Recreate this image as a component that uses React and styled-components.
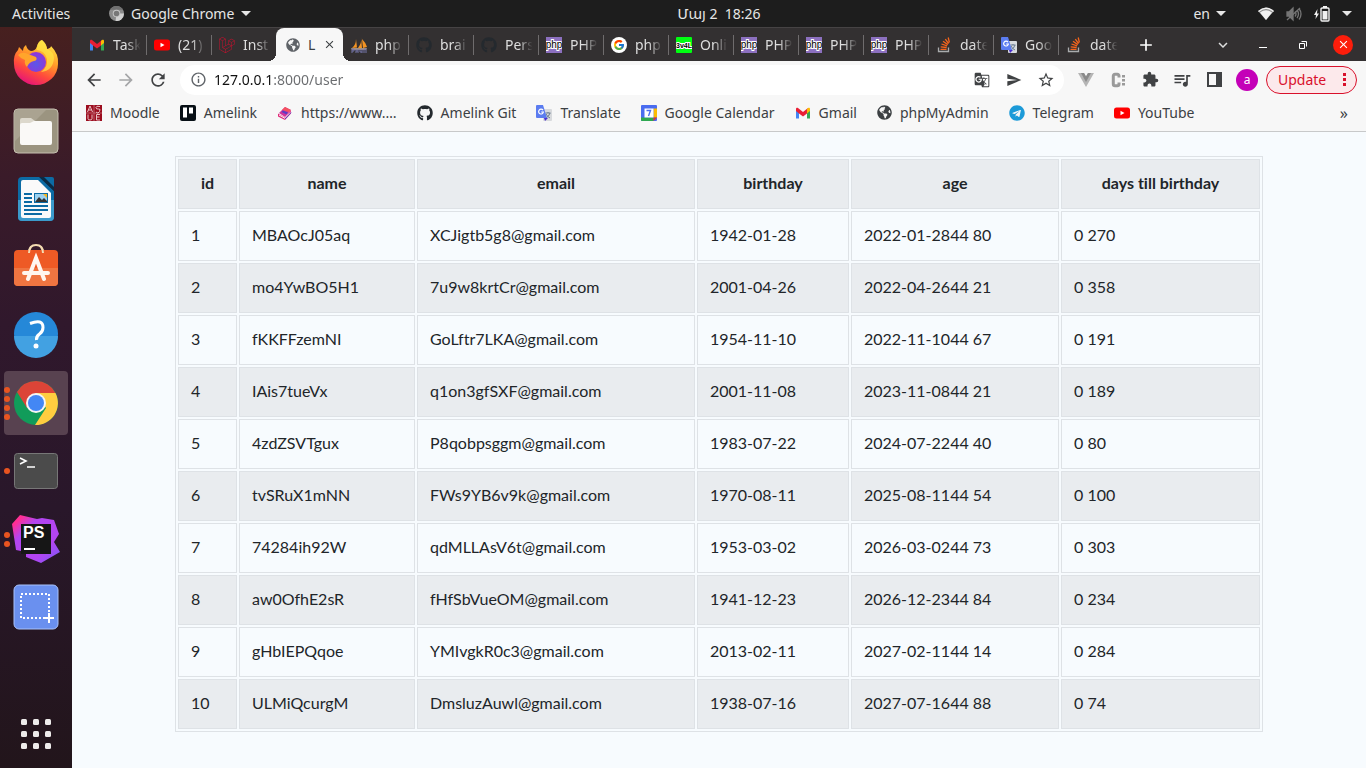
import React from "react";
import styled, { createGlobalStyle, css } from "styled-components";
import { FaGithub, FaGlobeAmericas, FaTelegram } from "react-icons/fa";
import { FcGoogle } from "react-icons/fc";
import { SiLaravel } from "react-icons/si";
import {
  MdAdd,
  MdArrowBack,
  MdArrowForward,
  MdClose,
  MdExtension,
  MdExpandMore,
  MdGTranslate,
  MdInfoOutline,
  MdQueueMusic,
  MdRefresh,
  MdSend,
  MdStarBorder,
} from "react-icons/md";

const GlobalStyle = createGlobalStyle`
  *, *::before, *::after { box-sizing: border-box; }
  body { margin: 0; background: #f7fbfe; }
  button { border: 0; padding: 0; background: none; color: inherit; font: inherit; cursor: pointer; }
  svg { display: block; flex: none; }
`;

const uiFont = css`
  font-family: "Noto Sans", "DejaVu Sans", sans-serif;
`;

/* ---------- layout ---------- */

const Desktop = styled.div`
  ${uiFont}
  font-size: 14px;
  display: flex;
  flex-direction: column;
  min-height: 100vh;
`;

const TopBar = styled.header`
  display: grid;
  grid-template-columns: 72px 1fr auto 1fr;
  align-items: center;
  height: 27px;
  background: #1d1d1d;
  color: #e6e6e6;
  white-space: nowrap;
`;

const ActivitiesButton = styled.button`
  padding-left: 12px;
  text-align: left;
`;

const AppMenu = styled.button`
  display: flex;
  align-items: center;
  gap: 7px;
  padding-left: 37px;
`;

const Clock = styled.button`
  white-space: pre;
`;

const StatusArea = styled.div`
  display: flex;
  align-items: center;
  justify-content: flex-end;
  gap: 12px;
  padding-right: 14px;
`;

const LanguageMenu = styled.button`
  display: flex;
  align-items: center;
  gap: 6px;
  margin-right: 20px;
`;

const Workspace = styled.div`
  display: flex;
  flex: 1;
`;

const Dock = styled.nav`
  display: flex;
  flex-direction: column;
  align-items: center;
  gap: 4px;
  flex: none;
  width: 72px;
  padding: 4px 4px 2px;
  background: linear-gradient(#47201f 0, #3a1b29 20%, #30182c 40%, #29172a 65%, #22151b 100%);
`;

const DockButton = styled.button`
  position: relative;
  display: grid;
  place-items: center;
  width: 64px;
  height: 64px;
  border-radius: 4px;
  background: ${(p) => (p.$active ? "#584250" : "none")};
  margin-top: ${(p) => (p.$last ? "auto" : "0")};
`;

const RunningDots = styled.span`
  position: absolute;
  left: 0;
  top: 0;
  bottom: 0;
  display: flex;
  flex-direction: column;
  justify-content: center;
  gap: 3px;
`;

const RunningDot = styled.i`
  width: 6px;
  height: 6px;
  border-radius: 50%;
  background: #e95420;
`;

const BrowserWindow = styled.div`
  display: flex;
  flex-direction: column;
  flex: 1;
  min-width: 0;
`;

/* ---------- tab strip ---------- */

const TabStrip = styled.div`
  display: flex;
  align-items: flex-end;
  height: 34px;
  padding-left: 9px;
  border-top: 1px solid #464344;
  background: #333031;
  color: #dedede;
`;

const Tabs = styled.div`
  display: flex;
  align-self: stretch;
`;

const Tab = styled.button`
  position: relative;
  display: flex;
  align-items: center;
  gap: 8px;
  width: ${(p) => (p.$active ? 67 : 65)}px;
  padding: ${(p) => (p.$active ? "0 9px 0 10px" : "0 3px 0 8px")};
  color: ${(p) => (p.$active ? "#3c4043" : "inherit")};
  background: ${(p) => (p.$active ? "#f7f7f7" : "none")};
  border-radius: ${(p) => (p.$active ? "8px 8px 0 0" : "0")};

  ${(p) =>
    p.$divided &&
    css`
      &::before {
        content: "";
        position: absolute;
        left: 0;
        top: 7px;
        width: 1px;
        height: 20px;
        background: #6f6c6d;
      }
    `}

  ${(p) =>
    p.$active &&
    css`
      &::before,
      &::after {
        content: "";
        position: absolute;
        bottom: 0;
        width: 8px;
        height: 8px;
      }
      &::before {
        right: 100%;
        background: radial-gradient(circle at 0 0, #333031 8px, #f7f7f7 8px);
      }
      &::after {
        left: 100%;
        background: radial-gradient(circle at 100% 0, #333031 8px, #f7f7f7 8px);
      }
    `}
`;

const TabTitle = styled.span`
  flex: 1;
  white-space: nowrap;
  text-align: left;

  ${(p) =>
    !p.$whole &&
    css`
      overflow: hidden;
      mask-image: linear-gradient(90deg, #000 45%, transparent 92%);
    `}
`;

const WindowControls = styled.div`
  display: flex;
  align-items: center;
  align-self: stretch;
  gap: 20px;
  margin-left: auto;
  padding-right: 13px;
`;

const NewTabButton = styled.button`
  align-self: center;
  margin-left: 13px;
`;

const CloseWindow = styled.button`
  display: grid;
  place-items: center;
  width: 20px;
  height: 20px;
  border-radius: 50%;
  background: #fc1d0b;
  color: #fff;
`;

/* ---------- toolbar ---------- */

const Toolbar = styled.div`
  display: flex;
  align-items: center;
  height: 37px;
  padding: 0 9px 0 12px;
  background: #f7f7f7;
  color: #404244;
`;

const NavButtons = styled.div`
  display: flex;
  gap: 12px;
`;

const IconButton = styled.button`
  display: grid;
  place-items: center;
  width: 20px;
  height: 20px;
  color: ${(p) => p.$color || "inherit"};
`;

const AddressBar = styled.div`
  display: flex;
  align-items: center;
  flex: 1;
  gap: 12px;
  height: 30px;
  margin-left: 12px;
  padding: 0 8px;
  border-radius: 15px;
  background: #fff;
`;

const AddressInput = styled.input`
  ${uiFont}
  flex: 1;
  min-width: 0;
  margin-left: -6px;
  padding: 0;
  border: 0;
  outline: 0;
  font-size: 14px;
  color: transparent;
  background: linear-gradient(90deg, #111 60px, #6a6c6f 60px);
  background-clip: text;
`;

const Extensions = styled.div`
  display: flex;
  align-items: center;
  gap: 12px;
  padding: 0 8px 0 12px;
`;

const Avatar = styled.button`
  width: 22px;
  height: 22px;
  border-radius: 50%;
  background: #c400b8;
  color: #fff;
  font-size: 12px;
  line-height: 20px;
`;

const UpdateButton = styled.button`
  display: flex;
  align-items: center;
  justify-content: space-between;
  width: 91px;
  height: 28px;
  padding: 0 10px 0 11px;
  border: 1px solid #d9102b;
  border-radius: 14px;
  background: #fce9eb;
  color: #d9102b;
`;

const BookmarkBar = styled.nav`
  display: flex;
  align-items: center;
  gap: 20px;
  height: 34px;
  padding: 0 18px 4px 14px;
  overflow: hidden;
  border-bottom: 1px solid #c8c9ca;
  background: #f7f7f7;
`;

const Bookmark = styled.a`
  display: flex;
  align-items: center;
  gap: 8px;
  color: #3c4043;
  text-decoration: none;
  white-space: nowrap;
`;

const Overflow = styled.button`
  margin-left: auto;
  color: #3c4043;
  font-size: 16px;
`;

/* ---------- page ---------- */

const Page = styled.main`
  flex: 1;
  padding: 24px 103px;
  background: #f7fbfe;
`;

const UserTable = styled.table`
  width: 100%;
  border: 1px solid #dee2e6;
  border-collapse: separate;
  border-spacing: 2px;
  table-layout: fixed;
  font-family: Lato, sans-serif;
  font-size: 16px;
  font-variant-ligatures: none;
  line-height: 24px;
  color: #212529;

  th,
  td {
    padding: 11px 12px 13px;
    border: 1px solid #dee2e6;
    white-space: nowrap;
  }
  td { text-align: left; }
  th,
  tbody tr:nth-child(even) td { background: #e9ecef; }
`;

const Column = styled.col`
  width: ${(p) => p.$share}%;
`;

/* ---------- drawings ---------- */

const Caret = () => (
  <svg width="10" height="5" viewBox="0 0 10 5"><path d="M0 0h10L5 5z" fill="#e6e6e6" /></svg>
);

const ChromiumMark = () => (
  <svg width="15" height="15" viewBox="0 0 16 16">
    <circle cx="8" cy="8" r="8" fill="#8b8b8b" />
    <path d="M8 8h8a8 8 0 0 1-9 8z" fill="#cfcfcf" />
    <path d="M1 4a8 8 0 0 1 14 0z" fill="#6f6f6f" />
    <circle cx="8" cy="8" r="4" fill="#c8c8c8" />
    <circle cx="8" cy="8" r="3" fill="#777" />
  </svg>
);

const Wifi = () => (
  <svg width="16" height="13" viewBox="0 0 16 13">
    <path d="M0 4Q8-3 16 4l-8 9z" fill="#8e8e8e" />
    <path d="M2 5.500Q8 1 14 5.500L8 13z" fill="#f2f2f2" />
    <path d="M0 4Q8-3 16 4l-1 1Q8-1 1 5z" fill="#f2f2f2" />
  </svg>
);

const Muted = () => (
  <svg width="16" height="16" viewBox="0 0 16 16" fill="none" stroke="#757575" strokeWidth="1.300">
    <path d="M1 6h2l4-4v12l-4-4H1z" fill="#757575" />
    <path d="M9 5.500q2 2.500 0 5M11 4q3 4 0 8M13 2.500q4 5.500 0 11M1 14 14 2" />
  </svg>
);

const Battery = () => (
  <svg width="16" height="16" viewBox="0 0 16 16">
    <path d="M3.500 3 0 9h2l-.5 4L5 7.500H3z" fill="#f2f2f2" />
    <rect x="7" y="2" width="8" height="13" rx="1" fill="none" stroke="#f2f2f2" strokeWidth="1.400" />
    <path d="M9 0h4v2H9zM8.500 5h5v8.500h-5z" fill="#f2f2f2" />
  </svg>
);

const Gmail = () => (
  <svg width="16" height="16" viewBox="0 0 16 16">
    <path d="M1 4v9.500h3V7z" fill="#4285f4" />
    <path d="M15 4v9.500h-3V7z" fill="#34a853" />
    <path d="M1 4c0-1 1-1.700 2-1l5 4 5-4-1 5.500-4 3-4-3L1 6z" fill="#ea1f35" />
    <path d="M12 4v4.500L15 6V4c0-1.400-1.200-1.700-2-1z" fill="#fbbc04" />
  </svg>
);

const YouTube = () => (
  <svg width="16" height="16" viewBox="0 0 16 16">
    <rect y="2.500" width="16" height="11" rx="2.500" fill="#f00" />
    <path d="m6.500 5.800 4 2.200-4 2.200z" fill="#fff" />
  </svg>
);

const Sails = () => (
  <svg width="16" height="16" viewBox="0 0 16 16">
    <path d="M5 2Q5 8 1 11l5-.5zM10 0q1 6-3 11h4zM11 2q4 4 5 8l-4 1z" fill="#f39323" />
    <path d="M0 11h16l-1 2H1z" fill="#a3907f" />
    <path d="M1 16v-4h2v2H1m4 2v-4m0 2h2m0-2v4m2-4v3h2m0-3v4m2 0v-4h2v4" fill="none" stroke="#7575a8" />
  </svg>
);

const StackIcon = () => (
  <svg width="16" height="16" viewBox="0 0 16 16" fill="none">
    <path d="M2.500 10.500v4h10v-4" stroke="#a9abad" strokeWidth="1.300" />
    <path d="M4.500 12.300h6M4.700 9.800l6 .7M5.500 7l5.600 1.900M7 4.300l4.800 3.300M9.300 2.200l3.300 4.300M12.200.500l1.200 5" stroke="#f4641c" strokeWidth="1.300" />
  </svg>
);

const BadgeText = styled.text`
  font-family: "Liberation Sans", sans-serif;
  font-weight: ${(p) => (p.$light ? 400 : 700)};
`;

const PhpIcon = () => (
  <svg width="16" height="16" viewBox="0 0 16 16">
    <rect width="16" height="16" fill="#8c70bf" />
    <BadgeText $light x="8" y="11" fontSize="10" textAnchor="middle" fill="#000" stroke="#fff" strokeWidth="2" paintOrder="stroke">php</BadgeText>
  </svg>
);

const EvalIcon = () => (
  <svg width="16" height="16" viewBox="0 0 16 16">
    <rect width="16" height="16" rx="1" fill="#0f1" />
    <BadgeText x="8" y="11" fontSize="7" textAnchor="middle" fill="#000" stroke="#fff" strokeWidth="2" paintOrder="stroke">3v4L</BadgeText>
  </svg>
);

const TranslateIcon = () => (
  <svg width="16" height="16" viewBox="0 0 16 16">
    <rect x="7" y="4" width="9" height="12" rx="1" fill="#d8dadd" />
    <path d="M9.500 8h5M12 7v1m2 0q-1 3.500-4 5m0-4q1.500 3 4 4" fill="none" stroke="#697b8e" />
    <path d="M8 13h4l-3 3z" fill="#4a2fd0" />
    <path d="M1 0h6l4 13H1a1 1 0 0 1-1-1V1a1 1 0 0 1 1-1z" fill="#5b7cf0" />
    <path d="M7 5.200A2.400 2.400 0 1 0 7.400 7H5.200" fill="none" stroke="#fff" strokeWidth="1.200" />
  </svg>
);

const AsueIcon = () => (
  <svg width="16" height="16" viewBox="0 0 16 16">
    <rect width="16" height="16" fill="#9c0d1f" />
    <path d="M8 0v16M0 8h16" stroke="#c9828a" strokeWidth=".700" />
    <g fill="none" stroke="#f0d5d7" strokeWidth=".900">
      <path d="m1.500 7 2.500-6 2.500 6M2.500 5h3M14 1.500q-4-1-4 1t2.500 1.500 1 2.500-3.500.5M2 9.500v4q0 1.500 2 1.500t2-1.500v-4M14 9.500h-3.500v5.500H14M10.500 12h3" />
    </g>
  </svg>
);

const TrelloIcon = () => (
  <svg width="16" height="16" viewBox="0 0 16 16">
    <rect width="16" height="16" rx="2" fill="#081016" />
    <path d="M3 2.500h4v10H3zM9 2.500h4v6H9z" fill="#fff" />
  </svg>
);

const BookIcon = () => (
  <svg width="16" height="16" viewBox="0 0 16 16">
    <path d="m2 8 6-6 6 3-6 7z" fill="#d0329b" />
    <path d="m5 5 3-3 6 3-2 2z" fill="#f5515f" />
    <path d="m4.500 7 5 2.500L11 7.500 6 5.500z" fill="#5b3cc4" />
    <path d="m1 8.500 7 4 6-7v3l-6 6.500-7-3.500z" fill="#e02a78" />
    <path d="m2 10 6 3.300L13.500 7.500" fill="none" stroke="#fff" strokeWidth=".900" />
    <path d="m8 14 6-6.500" stroke="#5b3cc4" />
  </svg>
);

const CalendarIcon = () => (
  <svg width="16" height="16" viewBox="0 0 16 16">
    <rect width="16" height="16" rx="1" fill="#4a6cf0" />
    <path d="M12.500 3.500H16v9h-3.500z" fill="#fbbc04" />
    <path d="M0 12.500h12.500V16H1a1 1 0 0 1-1-1z" fill="#2fa84f" />
    <path d="M12.500 12.500H16L12.500 16z" fill="#e5342a" />
    <path d="M3.500 3.500h9v9h-9z" fill="#fff" />
    <path d="M5.500 5.500h4l-2 5.500" fill="none" stroke="#4a6cf0" strokeWidth="1.400" />
  </svg>
);

const VueIcon = () => (
  <svg width="16" height="14" viewBox="0 0 16 14">
    <path d="M0 0h6l2 3.500L10 0h6L8 14z" fill="#b5b5b5" />
    <path d="M3 0h3l2 3.500L10 0h3L8 9z" fill="#8a8a8a" />
  </svg>
);

const ColonIcon = () => (
  <svg width="15" height="16" viewBox="0 0 15 16">
    <path d="M8 5.500V4Q8 2.300 6.300 2.300H4Q2.300 2.300 2.300 4v8q0 1.700 1.700 1.700h2.300Q8 13.700 8 12v-1.500" fill="none" stroke="#9a9a9a" strokeWidth="3" />
    <path d="M11 3h3v2.500h-3zm0 4h3v2.500h-3zm0 4h3v2.500h-3z" fill="#9a9a9a" />
  </svg>
);

const SidePanelIcon = () => (
  <svg width="15" height="15" viewBox="0 0 15 15">
    <path d="M1 1h13v13H1z" fill="none" stroke="#404244" strokeWidth="2" />
    <path d="M9 1h5v13H9z" fill="#404244" />
  </svg>
);

const Firefox = () => (
  <svg width="48" height="48" viewBox="0 0 48 48">
    <defs>
      <linearGradient id="foxBody" x1=".8" y1="0" x2=".3" y2="1">
        <stop offset="0" stopColor="#fff04a" />
        <stop offset=".4" stopColor="#ff9a28" />
        <stop offset=".7" stopColor="#ff4a3c" />
        <stop offset="1" stopColor="#e4117c" />
      </linearGradient>
      <radialGradient id="foxGlobe" cx=".5" cy=".6" r=".6">
        <stop offset="0" stopColor="#5b57e8" />
        <stop offset="1" stopColor="#9434d6" />
      </radialGradient>
    </defs>
    <path d="M30 1q5 4 5 9 4-1 4-3 8 8 7 18A22 21 0 0 1 2 25Q1 16 6 11l1-3 4 4q0-4 3-6 1 5 5 6 4 0 6-4 1-6 5-7z" fill="url(#foxBody)" />
    <path d="M30 1q-7 5-5 10 8 1 10 9 1 8-6 13 12-1 13-14 0-6-7-9-1-5-5-9z" fill="#ffe544" opacity=".7" />
    <circle cx="24" cy="23" r="10" fill="url(#foxGlobe)" />
    <path d="M6 16q4-4 10-1l8 3q2 3-2 4-5 1-7 6-3-3-2-7-4-1-7-5z" fill="#ffa52b" />
  </svg>
);

const Files = () => (
  <svg width="48" height="48" viewBox="0 0 48 48">
    <rect x="2" y="2" width="44" height="44" rx="4" fill="#9b9480" stroke="#c5bfb0" />
    <path d="M3 34 34 3H6Q3 3 3 6z" fill="#aaa391" />
    <path d="M8 13q0-2 2-2h9l4 3v5H8z" fill="#dcd8cc" />
    <path d="M8 18q0-2 2-2h8l4-2h16q2 0 2 2v20q0 2-2 2H10q-2 0-2-2z" fill="#faf9f7" />
  </svg>
);

const Writer = () => (
  <svg width="48" height="48" viewBox="0 0 48 48">
    <path d="M10 2h18l14 14v26q0 4-4 4H10q-4 0-4-4V6q0-4 4-4z" fill="#0c6ba4" />
    <path d="M6 25h36v17q0 4-4 4H10q-4 0-4-4z" fill="#3b9acb" />
    <path d="M9 7q0-2 2-2h15l13 13v23q0 2-2 2H11q-2 0-2-2z" fill="#fafafa" />
    <path d="M27 2h6l9 10v4z" fill="#0a2b45" />
    <path d="M32 2h8q2 0 2 2v8z" fill="#0c6ba4" />
    <path d="M12 19h8M12 23h8M12 27h8M12 31h24M12 35h24M12 39h18" stroke="#0c6ba4" strokeWidth="2" />
    <rect x="22.500" y="18.500" width="13" height="9" fill="#9bd1f0" stroke="#0c6ba4" />
    <path d="m23 27 4-5 3 3 2-2 3 3v1z" fill="#333" />
    <path d="M31 19h4v4z" fill="#f6b51e" />
  </svg>
);

const Software = () => (
  <svg width="48" height="48" viewBox="0 0 48 48">
    <path d="M17 10q0-8 7-8t7 8" fill="none" stroke="#f4dcb2" strokeWidth="2" />
    <rect x="2" y="7" width="44" height="36" rx="4" fill="#ee5a25" />
    <path d="M2 25h44v14q0 4-4 4H6q-4 0-4-4z" fill="#ef7541" />
    <path d="M17 10q0-4 2-6M31 10q0-4-2-6" fill="none" stroke="#f4dcb2" strokeWidth="2" />
    <path d="m16 36 8-21 8 21M12 30h24" fill="none" stroke="#fff7f0" strokeWidth="4" strokeLinecap="round" />
  </svg>
);

const Help = () => (
  <svg width="48" height="48" viewBox="0 0 48 48">
    <circle cx="24" cy="23" r="22" fill="#2588d8" />
    <path d="M2 25a22 22 0 0 0 44 0z" fill="#42a1e2" />
    <path d="M18 12.500q13-5 13 4 0 4-3.500 6.500t-3 6" fill="none" stroke="#fff" strokeWidth="3" />
    <circle cx="24" cy="35" r="2.500" fill="#fff" />
  </svg>
);

const Chrome = () => (
  <svg width="48" height="48" viewBox="0 0 48 48">
    <circle cx="24" cy="24" r="22" fill="#119c5a" />
    <path d="M24 2a22 22 0 0 1 19.500 12H24l-9 15L5 13A22 22 0 0 1 24 2z" fill="#dc4437" />
    <path d="M24 14h19.500A22 22 0 0 1 23 46l11-17z" fill="#ffcd40" />
    <circle cx="24" cy="24" r="10" fill="#f5f5f5" />
    <circle cx="24" cy="24" r="8" fill="#4387f4" />
  </svg>
);

const Terminal = () => (
  <svg width="48" height="48" viewBox="0 0 48 48">
    <rect x="2.500" y="6.500" width="43" height="35" rx="3" fill="#4b4b4b" stroke="#777" />
    <path d="m8 11 6 3-6 3M15 20h8" fill="none" stroke="#fff" strokeWidth="1.600" />
  </svg>
);

const PhpStorm = () => (
  <svg width="48" height="48" viewBox="0 0 48 48">
    <defs>
      <linearGradient id="storm" x1="0" y1="0" x2="1" y2="1">
        <stop offset="0" stopColor="#ff2f94" />
        <stop offset=".12" stopColor="#ff2f94" />
        <stop offset=".3" stopColor="#b345f1" />
        <stop offset=".7" stopColor="#b345f1" />
        <stop offset="1" stopColor="#765af8" />
      </linearGradient>
    </defs>
    <path d="m0 9 8-9 17 4 5-1 12 2 5 14-5 8 6 10-19 11-15-6v-5L4 35z" fill="url(#storm)" />
    <rect x="9" y="9" width="30" height="30" fill="#161616" />
    <BadgeText x="11" y="23" fontSize="16" fill="#fff">PS</BadgeText>
    <path d="M12 33h11v2H12z" fill="#fff" />
  </svg>
);

const Screenshot = () => (
  <svg width="48" height="48" viewBox="0 0 48 48">
    <rect x="2" y="2" width="44" height="44" rx="5" fill="#6a90ef" stroke="#a9c2fb" />
    <path d="M9 11h28v24H9z" fill="none" stroke="#fff" strokeWidth="2" strokeDasharray="2 2" />
    <path d="M37 30v10M32 35h10" stroke="#fff" strokeWidth="2" />
  </svg>
);

const AppGrid = () => (
  <svg width="30" height="30" viewBox="0 0 30 30" fill="#eeeceb">
    {[0, 12, 24].map((y) => [0, 12, 24].map((x) => <rect key={`${x}-${y}`} x={x} y={y} width="6" height="6" rx="1.500" />))}
  </svg>
);

/* ---------- data ---------- */

const dockItems = [
  ["Firefox", <Firefox />, 0],
  ["Files", <Files />, 0],
  ["LibreOffice Writer", <Writer />, 0],
  ["Ubuntu Software", <Software />, 0],
  ["Help", <Help />, 0],
  ["Google Chrome", <Chrome />, 4],
  ["Terminal", <Terminal />, 1],
  ["PhpStorm", <PhpStorm />, 2],
  ["Screenshot", <Screenshot />, 0],
];

const tabs = [
  ["Task", <Gmail />],
  ["(21)", <YouTube />],
  ["Inst", <SiLaravel size={16} color="#c8102e" />],
  ["L", <FaGlobeAmericas size={14} color="#5f6368" />],
  ["php", <Sails />],
  ["brai", <FaGithub size={16} color="#24292e" />],
  ["Pers", <FaGithub size={16} color="#24292e" />],
  ["PHP", <PhpIcon />],
  ["php", <svg width="16" height="16" viewBox="0 0 16 16"><circle cx="8" cy="8" r="8" fill="#fff" /><FcGoogle x="2" y="2" size={12} /></svg>],
  ["Onli", <EvalIcon />],
  ["PHP", <PhpIcon />],
  ["PHP", <PhpIcon />],
  ["PHP", <PhpIcon />],
  ["date", <StackIcon />],
  ["Goo", <TranslateIcon />],
  ["date", <StackIcon />],
];

const bookmarks = [
  ["Moodle", <AsueIcon />],
  ["Amelink", <TrelloIcon />],
  ["https://www.…", <BookIcon />],
  ["Amelink Git", <FaGithub size={16} color="#24292e" />],
  ["Translate", <TranslateIcon />],
  ["Google Calendar", <CalendarIcon />],
  ["Gmail", <Gmail />],
  ["phpMyAdmin", <FaGlobeAmericas size={15} color="#3c4043" />],
  ["Telegram", <FaTelegram size={16} color="#1c9ad8" />],
  ["YouTube", <YouTube />],
];

const columns = [
  ["id", 59],
  ["name", 176],
  ["email", 278],
  ["birthday", 152],
  ["age", 208],
  ["days till birthday", 199],
];
const columnTotal = columns.reduce((sum, [, width]) => sum + width, 0);

const users = [
  ["1", "MBAOcJ05aq", "XCJigtb5g8@gmail.com", "1942-01-28", "2022-01-2844 80", "0 270"],
  ["2", "mo4YwBO5H1", "7u9w8krtCr@gmail.com", "2001-04-26", "2022-04-2644 21", "0 358"],
  ["3", "fKKFFzemNI", "GoLftr7LKA@gmail.com", "1954-11-10", "2022-11-1044 67", "0 191"],
  ["4", "IAis7tueVx", "q1on3gfSXF@gmail.com", "2001-11-08", "2023-11-0844 21", "0 189"],
  ["5", "4zdZSVTgux", "P8qobpsggm@gmail.com", "1983-07-22", "2024-07-2244 40", "0 80"],
  ["6", "tvSRuX1mNN", "FWs9YB6v9k@gmail.com", "1970-08-11", "2025-08-1144 54", "0 100"],
  ["7", "74284ih92W", "qdMLLAsV6t@gmail.com", "1953-03-02", "2026-03-0244 73", "0 303"],
  ["8", "aw0OfhE2sR", "fHfSbVueOM@gmail.com", "1941-12-23", "2026-12-2344 84", "0 234"],
  ["9", "gHbIEPQqoe", "YMIvgkR0c3@gmail.com", "2013-02-11", "2027-02-1144 14", "0 284"],
  ["10", "ULMiQcurgM", "DmsluzAuwl@gmail.com", "1938-07-16", "2027-07-1644 88", "0 74"],
];

export default function App() {
  return (
    <Desktop>
      <GlobalStyle />
      <TopBar>
        <ActivitiesButton>Activities</ActivitiesButton>
        <AppMenu><ChromiumMark />Google Chrome<Caret /></AppMenu>
        <Clock>{"Մայ 2  18:26"}</Clock>
        <StatusArea>
          <LanguageMenu>en<Caret /></LanguageMenu>
          <Wifi /><Muted /><Battery /><Caret />
        </StatusArea>
      </TopBar>
      <Workspace>
        <Dock aria-label="Dock">
          {dockItems.map(([name, icon, windows]) => (
            <DockButton key={name} aria-label={name} $active={name === "Google Chrome"}>
              {icon}
              <RunningDots>
                {Array.from({ length: windows }, (_, i) => <RunningDot key={i} />)}
              </RunningDots>
            </DockButton>
          ))}
          <DockButton aria-label="Show applications" $last><AppGrid /></DockButton>
        </Dock>
        <BrowserWindow>
          <TabStrip>
            <Tabs role="tablist">
              {tabs.map(([title, icon], i) => (
                <Tab key={i} role="tab" aria-selected={i === 3} $active={i === 3} $divided={i > 0 && i !== 3 && i !== 4}>
                  {icon}
                  <TabTitle $whole={i === 3}>{title}</TabTitle>
                  {i === 3 && <MdClose size={13} />}
                </Tab>
              ))}
            </Tabs>
            <NewTabButton aria-label="New tab"><MdAdd size={20} color="#fff" /></NewTabButton>
            <WindowControls>
              <IconButton aria-label="Search tabs"><MdExpandMore size={18} /></IconButton>
              <IconButton aria-label="Minimize">
                <svg width="10" height="10" viewBox="0 0 10 10"><path d="M1 7h8v1H1z" fill="#fff" /></svg>
              </IconButton>
              <IconButton aria-label="Restore">
                <svg width="8" height="8" viewBox="0 0 8 8" fill="none" stroke="#fff"><path d="M.5 2.500h5v5h-5zM2.500 .5h5v5" /></svg>
              </IconButton>
              <CloseWindow aria-label="Close"><MdClose size={13} /></CloseWindow>
            </WindowControls>
          </TabStrip>
          <Toolbar>
            <NavButtons>
              <IconButton aria-label="Back"><MdArrowBack size={20} /></IconButton>
              <IconButton aria-label="Forward" $color="#a5a6a8"><MdArrowForward size={20} /></IconButton>
              <IconButton aria-label="Reload"><MdRefresh size={20} /></IconButton>
            </NavButtons>
            <AddressBar>
              <IconButton aria-label="Site information" $color="#5f6368"><MdInfoOutline size={17} /></IconButton>
              <AddressInput aria-label="Address" defaultValue="127.0.0.1:8000/user" />
              <IconButton aria-label="Translate page"><MdGTranslate size={16} /></IconButton>
              <IconButton aria-label="Share"><MdSend size={16} /></IconButton>
              <IconButton aria-label="Bookmark"><MdStarBorder size={18} /></IconButton>
            </AddressBar>
            <Extensions>
              <IconButton aria-label="Vue devtools"><VueIcon /></IconButton>
              <IconButton aria-label="Cookies"><ColonIcon /></IconButton>
              <IconButton aria-label="Extensions"><MdExtension size={17} /></IconButton>
              <IconButton aria-label="Media"><MdQueueMusic size={20} /></IconButton>
              <IconButton aria-label="Side panel"><SidePanelIcon /></IconButton>
              <Avatar aria-label="Profile">a</Avatar>
            </Extensions>
            <UpdateButton>
              Update
              <svg width="3" height="13" viewBox="0 0 3 13" fill="#d9102b"><path d="M0 0h3v3H0zM0 5h3v3H0zM0 10h3v3H0z" /></svg>
            </UpdateButton>
          </Toolbar>
          <BookmarkBar aria-label="Bookmarks">
            {bookmarks.map(([label, icon]) => (
              <Bookmark key={label} href="#">{icon}{label}</Bookmark>
            ))}
            <Overflow aria-label="More bookmarks">»</Overflow>
          </BookmarkBar>
          <Page>
            <UserTable>
              <colgroup>
                {columns.map(([name, width]) => <Column key={name} $share={(width / columnTotal) * 100} />)}
              </colgroup>
              <thead>
                <tr>{columns.map(([name]) => <th key={name} scope="col">{name}</th>)}</tr>
              </thead>
              <tbody>
                {users.map((user) => (
                  <tr key={user[0]}>{user.map((value, i) => <td key={i}>{value}</td>)}</tr>
                ))}
              </tbody>
            </UserTable>
          </Page>
        </BrowserWindow>
      </Workspace>
    </Desktop>
  );
}
